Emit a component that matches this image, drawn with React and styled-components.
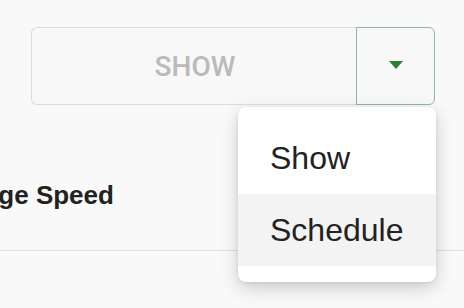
import React from "react";
import styled, { createGlobalStyle } from "styled-components";

const GlobalStyle = createGlobalStyle`
  html, body {
    margin: 0;
    padding: 0;
    background: #f9f9f9;
    font-family: "Liberation Sans", Arial, sans-serif;
    overflow: hidden;
  }
`;

const Page = styled.div`
  width: 464px;
  height: 308px;
  padding-top: 27px;
  box-sizing: border-box;
`;

const Toolbar = styled.div`
  padding: 0 29px 0 31px;
`;

const ButtonGroup = styled.div`
  position: relative;
  display: flex;
  height: 78px;
`;

const MainButton = styled.button`
  flex: 1;
  border: 1px solid #dcdcdc;
  border-right: none;
  border-radius: 6px 0 0 6px;
  background: #f8f8f8;
  color: #bababa;
  font-family: Roboto, "Liberation Sans", sans-serif;
  font-size: 28px;
  font-weight: 500;
  padding: 0 0 0 2px;
`;

const Toggle = styled.button`
  width: 79px;
  border: 1px solid #93b897;
  border-radius: 0 6px 6px 0;
  background: #f8f8f8;
  display: flex;
  align-items: center;
  justify-content: center;
  padding: 0 0 2px;
`;

const Caret = styled.span`
  width: 0;
  height: 0;
  border-left: 7px solid transparent;
  border-right: 7px solid transparent;
  border-top: 8px solid #2e7d32;
`;

const Menu = styled.ul`
  position: absolute;
  top: calc(100% + 2px);
  right: -1px;
  width: 198px;
  margin: 0;
  padding: 15px 0 16px;
  list-style: none;
  background: #fff;
  border-radius: 8px;
  box-shadow: 0 6px 18px rgba(0, 0, 0, 0.18), 0 1px 4px rgba(0, 0, 0, 0.08);
  z-index: 2;
`;

const MenuItem = styled.li`
  height: 72px;
  display: flex;
  align-items: center;
  padding-left: 32px;
  font-size: 32px;
  color: #222;
  background: ${({ active }) => (active ? "#f3f3f3" : "transparent")};
`;

const Row = styled.div`
  display: flex;
  align-items: center;
  height: 30px;
  margin: 75px 0 40px -73px;
`;

const Label = styled.span`
  font-size: 26px;
  font-weight: 700;
  color: #222;
  white-space: nowrap;
`;

const Divider = styled.div`
  height: 1px;
  background: #e0e0e0;
`;

export default function App() {
  return (
    <>
      <GlobalStyle />
      <Page>
        <Toolbar>
          <ButtonGroup>
            <MainButton>SHOW</MainButton>
            <Toggle>
              <Caret />
            </Toggle>
            <Menu>
              <MenuItem>Show</MenuItem>
              <MenuItem active>Schedule</MenuItem>
            </Menu>
          </ButtonGroup>
        </Toolbar>
        <Row>
          <Label>Average Speed</Label>
        </Row>
        <Divider />
      </Page>
    </>
  );
}
